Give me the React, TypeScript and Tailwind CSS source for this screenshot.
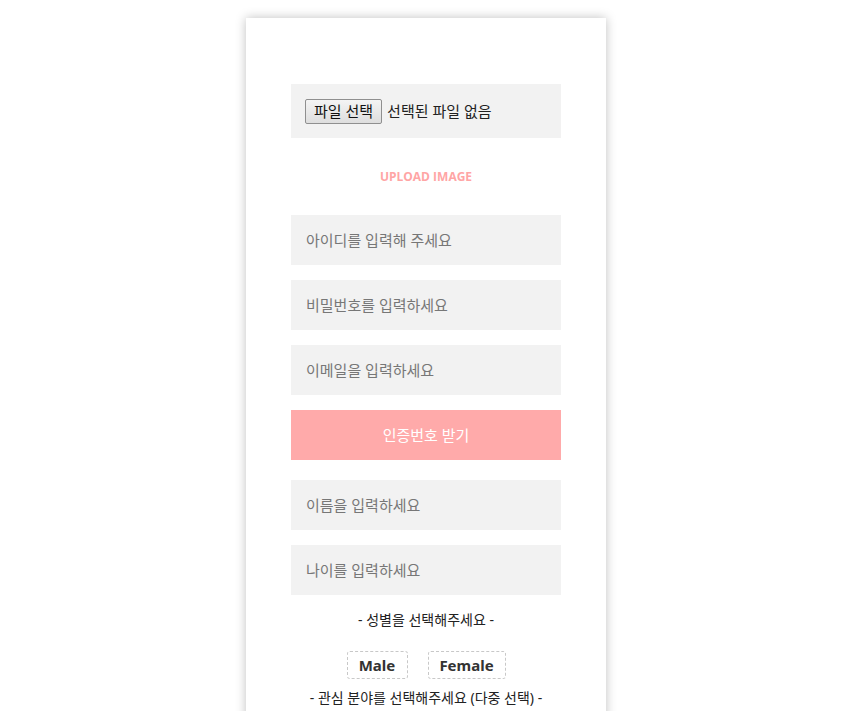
import React from 'react';

const fields = [
  { placeholder: '아이디를 입력해 주세요', type: 'text' },
  { placeholder: '비밀번호를 입력하세요', type: 'password' },
  { placeholder: '이메일을 입력하세요', type: 'email' },
];

const moreFields = [
  { placeholder: '이름을 입력하세요', type: 'text' },
  { placeholder: '나이를 입력하세요', type: 'number' },
];

const font = "font-['Noto_Sans','Noto_Sans_CJK_KR',sans-serif]";

const Field: React.FC<{ placeholder: string; type: string }> = ({ placeholder, type }) => (
  <input
    type={type}
    placeholder={placeholder}
    className="w-full h-[50px] bg-[#f2f2f2] px-[15px] text-[15px] text-[#333] placeholder:text-[#777] outline-none"
  />
);

export default function App() {
  return (
    <div className={`min-h-screen bg-white flex justify-center pt-[18px] pr-4 ${font}`}>
      <div className="w-[360px] bg-white shadow-[0_0_10px_rgba(0,0,0,0.25)] px-[45px] pt-[66px] pb-10">
        <div className="h-[54px] bg-[#f2f2f2] flex items-center px-[14px] gap-[5px] text-[15px] text-[#222]">
          <span className="h-[25px] px-[8px] flex items-center border border-[#8f8f8f] rounded-[2px] bg-gradient-to-b from-[#f4f4f4] to-[#dedede] text-[#111]">
            파일 선택
          </span>
          <span>선택된 파일 없음</span>
        </div>

        <div className="h-[77px] flex items-center justify-center pt-[1px] text-[12px] font-bold text-[#ffa5a5] font-['Open_Sans',sans-serif]">
          UPLOAD IMAGE
        </div>

        <div className="flex flex-col gap-[15px]">
          {fields.map((f) => (
            <Field key={f.placeholder} {...f} />
          ))}
          <button className="w-full h-[50px] bg-[#ffaaaa] text-white text-[15px]">인증번호 받기</button>
        </div>

        <div className="flex flex-col gap-[15px] mt-5">
          {moreFields.map((f) => (
            <Field key={f.placeholder} {...f} />
          ))}
        </div>

        <p className="text-center text-[14px] text-[#222] mt-[14px]">- 성별을 선택해주세요 -</p>

        <div className="flex justify-center gap-5 mt-[21px]">
          <button className="w-[61px] h-[28px] border border-dashed border-[#c8c8c8] rounded-[3px] text-[15px] font-bold text-[#333]">
            Male
          </button>
          <button className="w-[78px] h-[28px] border border-dashed border-[#c8c8c8] rounded-[3px] text-[15px] font-bold text-[#333]">
            Female
          </button>
        </div>

        <p className="text-center text-[14px] text-[#222] mt-[8px]">- 관심 분야를 선택해주세요 (다중 선택) -</p>
      </div>
    </div>
  );
}
